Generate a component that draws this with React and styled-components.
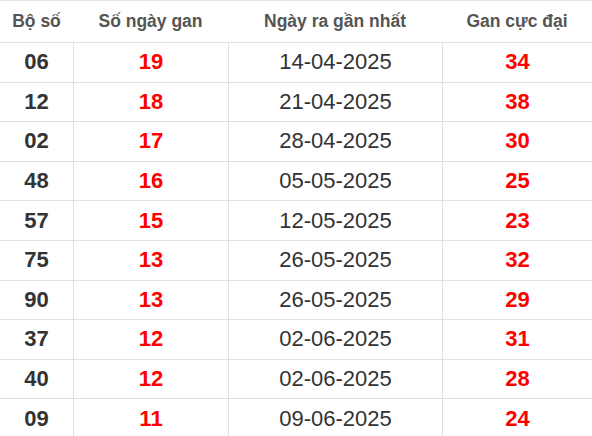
import styled, { createGlobalStyle } from 'styled-components';

const rows = [
  ['06', '19', '14-04-2025', '34'],
  ['12', '18', '21-04-2025', '38'],
  ['02', '17', '28-04-2025', '30'],
  ['48', '16', '05-05-2025', '25'],
  ['57', '15', '12-05-2025', '23'],
  ['75', '13', '26-05-2025', '32'],
  ['90', '13', '26-05-2025', '29'],
  ['37', '12', '02-06-2025', '31'],
  ['40', '12', '02-06-2025', '28'],
  ['09', '11', '09-06-2025', '24'],
];

const GlobalStyle = createGlobalStyle`
  body {
    margin: 0;
    background: #ffffff;
    font-family: "Liberation Sans", Arial, sans-serif;
  }
`;

export default function App() {
  return (
    <>
      <GlobalStyle />
      <Table>
        <HeaderRow>
          <HeadCell>Bộ số</HeadCell>
          <HeadCell>Số ngày gan</HeadCell>
          <HeadCell>Ngày ra gần nhất</HeadCell>
          <HeadCell>Gan cực đại</HeadCell>
        </HeaderRow>
        {rows.map((r, i) => (
          <Row key={i}>
            <Cell bold>{r[0]}</Cell>
            <Cell bold red>{r[1]}</Cell>
            <Cell>{r[2]}</Cell>
            <Cell bold red>{r[3]}</Cell>
          </Row>
        ))}
      </Table>
    </>
  );
}

const Table = styled.div`
  width: 592px;
  border-top: 1px solid #e6e6e6;
`;

const HeaderRow = styled.div`
  display: grid;
  grid-template-columns: 73px 155px 214px 150px;
  height: 42px;
  box-sizing: border-box;
  border-bottom: 1px solid #e0e0e0;
`;

const HeadCell = styled.div`
  display: flex;
  align-items: center;
  justify-content: center;
  color: #555555;
  font-size: 17.5px;
  font-weight: 700;
`;

const Row = styled.div`
  display: grid;
  grid-template-columns: 73px 155px 214px 150px;
  height: 39.6px;
  box-sizing: border-box;
  border-bottom: 1px solid #e0e0e0;
`;

const Cell = styled.div`
  display: flex;
  align-items: center;
  justify-content: center;
  font-size: 22px;
  font-weight: ${p => (p.bold ? 700 : 400)};
  color: ${p => (p.red ? '#ff0000' : '#333333')};
  & + & {
    border-left: 1px solid #e0e0e0;
  }
`;
